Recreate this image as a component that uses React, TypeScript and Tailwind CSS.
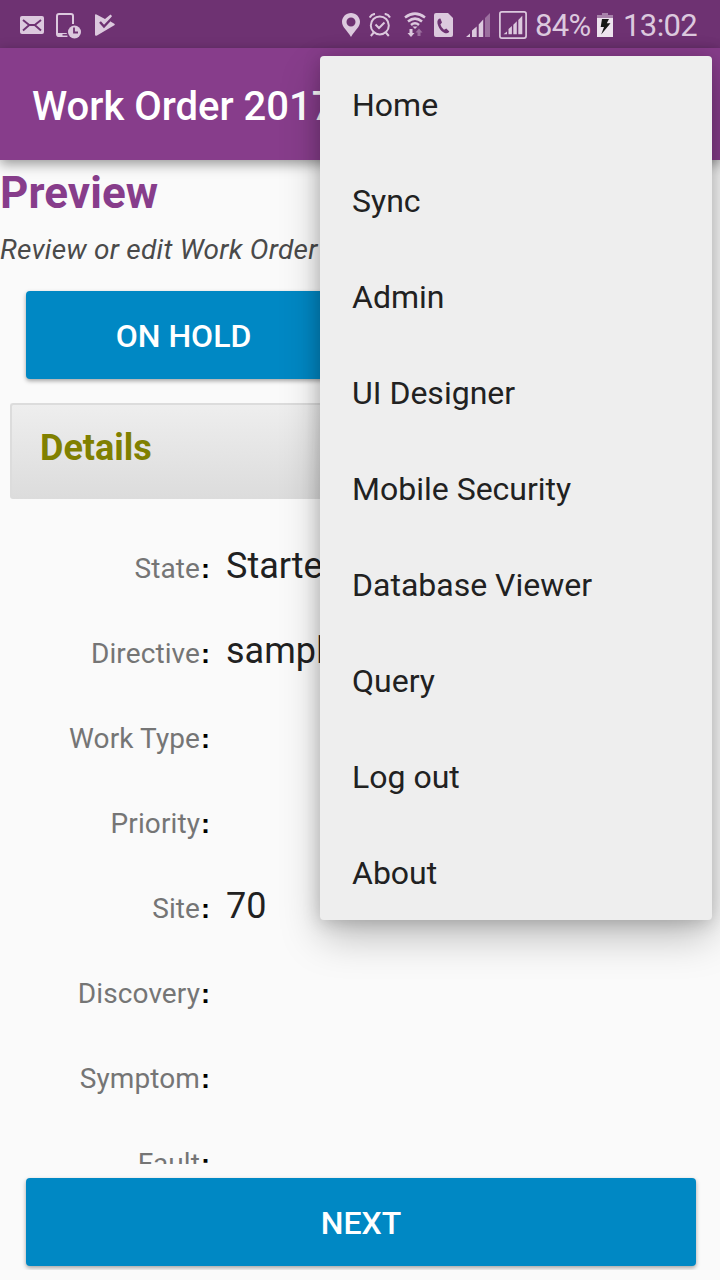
import React from "react";

const menuItems = ["Home", "Sync", "Admin", "UI Designer", "Mobile Security", "Database Viewer", "Query", "Log out", "About"];

const fields = [
  { label: "State", value: "Started" },
  { label: "Directive", value: "sample" },
  { label: "Work Type", value: "" },
  { label: "Priority", value: "" },
  { label: "Site", value: "70" },
  { label: "Discovery", value: "" },
  { label: "Symptom", value: "" },
  { label: "Fault", value: "" },
];

function MailIcon() {
  return (
    <svg width="24" height="18" viewBox="0 0 24 18" className="mt-4">
      <rect width="24" height="18" rx="2" fill="#dcc9de" />
      <path d="M3 4 L9.2 9 H14.8 L21 4 M3 14.5 L9 9.3 M21 14.5 L15 9.3" fill="none" stroke="#6e3272" strokeWidth="1.9" />
    </svg>
  );
}

function DeviceClockIcon() {
  return (
    <svg width="26" height="26" viewBox="0 0 26 26" className="ml-3 mt-[13px]">
      <path d="M11.5 23 H3 Q1 23 1 21 V3 Q1 1 3 1 H15 Q17 1 17 3 V11" fill="none" stroke="#dcc9de" strokeWidth="2" />
      <path d="M1 20 H11 V24 H3 Q1 24 1 22 Z" fill="#dcc9de" />
      <path d="M6.5 21.8 H11" stroke="#6e3272" strokeWidth="1.5" />
      <circle cx="18.5" cy="19" r="8" fill="#6e3272" />
      <circle cx="18.5" cy="19" r="6.5" fill="#dcc9de" />
      <path d="M18 14.5 V19.5 H22" fill="none" stroke="#6e3272" strokeWidth="1.8" />
    </svg>
  );
}

function PlayCheckIcon() {
  return (
    <svg width="20" height="22" viewBox="0 0 20 22" className="ml-[13px] mt-[14px]">
      <path d="M0 1.3 Q0 -.3 1.5 .4 L10 5 L15.5 .5 L17 2 L15.5 7.5 L19.3 9.8 Q20.3 10.7 19.3 11.3 L2 21.5 Q0 22.4 0 20.5 Z" fill="#dcc9de" />
      <path d="M5 8 L9 12.5 L18 3" fill="none" stroke="#6e3272" strokeWidth="2.4" />
    </svg>
  );
}

function PinIcon() {
  return (
    <svg width="18" height="24" viewBox="0 0 18 24" className="mt-[13px]">
      <path fillRule="evenodd" d="M9 0 C4 0 0 4 0 8.8 C0 14.5 5 17 9 24 C13 17 18 14.5 18 8.8 C18 4 14 0 9 0 Z M9 4.5 A4.5 4.5 0 1 1 9 13.5 A4.5 4.5 0 1 1 9 4.5 Z" fill="#dcc9de" />
    </svg>
  );
}

function AlarmIcon() {
  return (
    <svg width="22" height="24" viewBox="0 0 22 24" className="ml-[9px] mt-[13px]" fill="none" stroke="#dcc9de">
      <circle cx="10.8" cy="12.4" r="9" strokeWidth="2" />
      <path d="M.7 4.5 Q2.5 1 6 .9 M15.7 .9 Q19.2 1 21 4.5 M4.8 19.5 L1.8 23 M16.8 19.5 L19.8 23" strokeWidth="2" />
      <path d="M6.5 11.5 L10 15 L15.5 9.5" strokeWidth="2" />
    </svg>
  );
}

function WifiIcon() {
  return (
    <svg width="22" height="25" viewBox="0 0 22 25" className="ml-[13px] mt-3" fill="none" stroke="#dcc9de" strokeWidth="2.5">
      <path d="M1 5.5 Q11 -2.3 21 5.5 M4 9.5 Q11 3.7 18 9.5 M7 13 Q11 9.6 15 13" />
      <path d="M8.5 14.5 H13.5 L11 17 Z" fill="#dcc9de" stroke="none" />
      <path d="M5.5 17 H8.5 V21 H10.5 L7 25 L3.5 21 H5.5 Z" fill="#dcc9de" stroke="none" />
      <path d="M13.5 24 H16.5 V20.5 H18.5 L15 16.5 L11.5 20.5 H13.5 Z" fill="#9c709f" stroke="none" />
    </svg>
  );
}

function SimCallIcon() {
  return (
    <svg width="19" height="24" viewBox="0 0 19 24" className="ml-[8px] mt-[13px]">
      <path d="M2 0 H14 L19 5 V22 Q19 24 17 24 H2 Q0 24 0 22 V2 Q0 0 2 0 Z" fill="#dcc9de" />
      <path d="M5 5.8 Q2.2 8 4.2 12.8 C6.2 17.6 9.6 20.5 12.8 20.3 Q14.6 20 15.3 18.6 L12.3 15.6 L10 16.8 Q7.2 14.7 6.4 11.5 L8 9.6 L6.4 5.5 Z" fill="#6e3272" />
    </svg>
  );
}

function SignalIcon() {
  return (
    <svg width="25" height="24" viewBox="0 0 25 24" className="ml-[13px] mt-[13px]">
      <path d="M0 24 L4 20.5 V24 Z M6 24 V17.5 L10.7 13.5 V24 Z M12.7 24 V11.5 L17.2 6.5 V24 Z" fill="#dcc9de" />
      <path d="M19 24 V5 L24 0 V24 Z" fill="#9c709f" />
    </svg>
  );
}

function BoxedSignalIcon() {
  return (
    <svg width="28" height="28" viewBox="0 0 28 28" className="ml-[8px] mt-[11px]">
      <rect x=".9" y=".9" width="26.2" height="26.2" rx="2" fill="none" stroke="#dcc9de" strokeWidth="1.7" />
      <path d="M4.5 23.2 L8 20.5 V23.2 Z M9.5 23.2 V18 L12.9 15 V23.2 Z M14.3 23.2 V13.8 L17.8 10.3 V23.2 Z M19.3 23.2 V9 L23.3 4.8 V23.2 Z" fill="#dcc9de" />
    </svg>
  );
}

function BatteryIcon() {
  return (
    <svg width="16" height="24" viewBox="0 0 16 24" className="ml-[7px] mt-[13px]">
      <path d="M5 0 H11 V2 H16 V5 H0 V2 H5 Z" fill="#a781aa" />
      <path d="M0 5 H16 V24 H0 Z" fill="#eee4ef" />
      <path d="M5 6 H12 L9.8 10.3 H13.5 L4.2 21.5 L7 14 H3.7 Z" fill="#171717" />
    </svg>
  );
}

function StatusBar() {
  return (
    <div className="flex h-12 items-start bg-[#6e3272] pl-5 text-[#dcc9de]">
      <MailIcon />
      <DeviceClockIcon />
      <PlayCheckIcon />
      <div className="ml-auto flex h-12 items-start">
        <PinIcon />
        <AlarmIcon />
        <WifiIcon />
        <SimCallIcon />
        <SignalIcon />
        <BoxedSignalIcon />
        <span className="ml-[8px] mt-[7px] w-[55px] whitespace-nowrap text-[31px] leading-[38px] tracking-[-0.7px]">84%</span>
        <BatteryIcon />
        <span className="ml-[10px] mt-[7px] w-[97px] whitespace-nowrap text-[31px] leading-[38px] tracking-[-0.6px]">13:02</span>
      </div>
    </div>
  );
}

function ActionButton({ children }: { children: React.ReactNode }) {
  return (
    <button className="block h-[88px] w-full rounded-[4px] bg-[#0088c4] text-[32px] font-medium leading-[90px] text-white shadow-[0_2px_4px_rgba(0,0,0,0.35)]">
      {children}
    </button>
  );
}

function OverflowMenu() {
  return (
    <nav className="absolute left-80 top-14 w-[392px] rounded-[4px] bg-[#eeeeee] shadow-[0_18px_42px_-2px_rgba(0,0,0,0.26),0_2px_18px_rgba(0,0,0,0.18)]">
      {menuItems.map((item) => (
        <div key={item} className="flex h-24 items-center pl-8 text-[32px] leading-[38px] text-[#212121]">
          <span className="pt-[2px]">{item}</span>
        </div>
      ))}
    </nav>
  );
}

export default function App() {
  return (
    <div className="relative flex h-[1280px] w-[720px] flex-col overflow-hidden bg-[#fafafa] font-['Roboto',sans-serif]">
      <StatusBar />
      <header className="z-0 flex h-28 shrink-0 items-center whitespace-nowrap bg-[#873d8b] pl-8 pt-[6px] text-[40px] font-medium leading-[48px] text-white shadow-[0_4px_12px_rgba(0,0,0,0.4)]">
        Work Order 2017
      </header>
      <main className="h-[1004px] shrink-0 overflow-hidden">
        <h1 className="mt-[7px] h-[52px] text-[44px] font-bold leading-[52px] tracking-[0.1px] text-[#873d8b]">Preview</h1>
        <p className="mt-[14px] h-[34px] whitespace-nowrap text-[28px] italic leading-[34px] tracking-[0.24px] text-[#4a4a4a]">Review or edit Work Order</p>
        <div className="mt-6 grid grid-cols-2 gap-[40px] pl-[26px] pr-6">
          <ActionButton>ON HOLD</ActionButton>
          <ActionButton>DONE</ActionButton>
        </div>
        <h2 className="ml-[10px] mr-[10px] mt-6 h-24 rounded-[3px] border-l-2 border-t-2 border-[#dcdcdc] bg-linear-to-b from-[#eeeeee] to-[#dcdcdc] pl-7 text-[36px] font-bold leading-[87px] text-[#808000]">
          Details
        </h2>
        <div className="pt-[41px]">
          {fields.map(({ label, value }) => (
            <div key={label} className="flex h-[85px] items-baseline leading-[52px]">
              <span className="w-[200px] text-right text-[28px] tracking-[0.1px] text-[#757575]">{label}</span>
              <span className="ml-px w-[25px] font-['Liberation_Sans',sans-serif] text-[27px] font-bold text-black">:</span>
              <span className="text-[36px] text-[#212121]">{value || "\u00a0"}</span>
            </div>
          ))}
        </div>
      </main>
      <footer className="h-[106px] shrink-0 overflow-hidden pl-[26px] pr-6 pt-[14px]">
        <ActionButton>NEXT</ActionButton>
      </footer>
      <OverflowMenu />
    </div>
  );
}
